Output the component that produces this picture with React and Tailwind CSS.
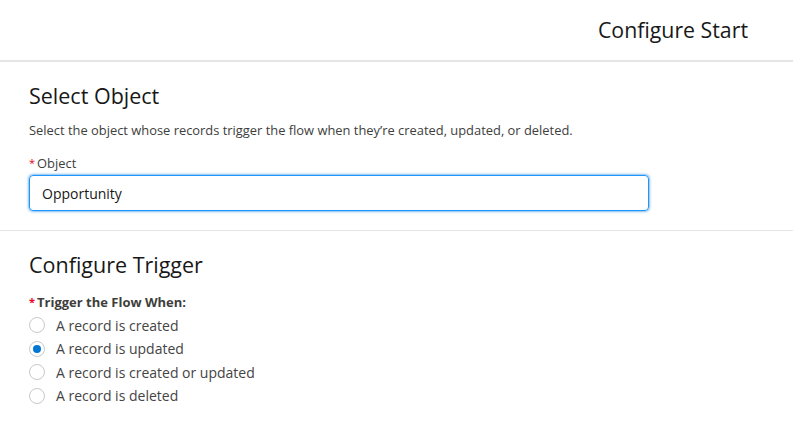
import React from 'react';

const options = [
  { label: 'A record is created', checked: false },
  { label: 'A record is updated', checked: true },
  { label: 'A record is created or updated', checked: false },
  { label: 'A record is deleted', checked: false },
];

function Radio({ label, checked }) {
  return (
    <label className="flex items-center h-[23.5px] gap-[11px]">
      <span className="w-[16px] h-[16px] rounded-full border border-[#c9c9c9] bg-white flex items-center justify-center shrink-0">
        {checked && <span className="w-[8px] h-[8px] rounded-full bg-[#0176d3]" />}
      </span>
      <span className="text-[14px] text-[#444444]">{label}</span>
    </label>
  );
}

export default function App() {
  return (
    <div className="w-[793px] h-[421px] bg-white text-[#181818] overflow-hidden" style={{ fontFamily: '"Open Sans", "Noto Sans", sans-serif' }}>
      <div className="h-[62px] border-b-2 border-[#e5e5e5] flex items-center justify-end pr-[45px]">
        <h1 className="text-[21.3px] font-normal">Configure Start</h1>
      </div>

      <section className="px-[29px] pt-[20px] pb-[19px] border-b border-[#e5e5e5]">
        <h2 className="text-[21.5px] leading-[28px]">Select Object</h2>
        <p className="text-[12.9px] text-[#3e3e3c] mt-[11px]">
          Select the object whose records trigger the flow when they’re created, updated, or deleted.
        </p>
        <div className="mt-[14px]">
          <div className="text-[12.9px] text-[#3e3e3c] leading-[18px]">
            <span className="text-[#ea001e] text-[11px] align-top mr-[2px]">*</span>Object
          </div>
          <div className="mt-[3px] w-[620px] h-[36px] rounded-[4px] border border-[#1b96ff] shadow-[0_0_3px_#0176d3] flex items-center px-[12px] text-[14px]">
            Opportunity
          </div>
        </div>
      </section>

      <section className="px-[29px] pt-[20px]">
        <h2 className="text-[21.5px] leading-[28px]">Configure Trigger</h2>
        <div className="mt-[14px] text-[13px] font-bold text-[#3e3e3c] leading-[18px]">
          <span className="text-[#ea001e] text-[11px] align-top mr-[2px]">*</span>Trigger the Flow When:
        </div>
        <div className="mt-[2px]">
          {options.map((o) => (
            <Radio key={o.label} {...o} />
          ))}
        </div>
      </section>
    </div>
  );
}
